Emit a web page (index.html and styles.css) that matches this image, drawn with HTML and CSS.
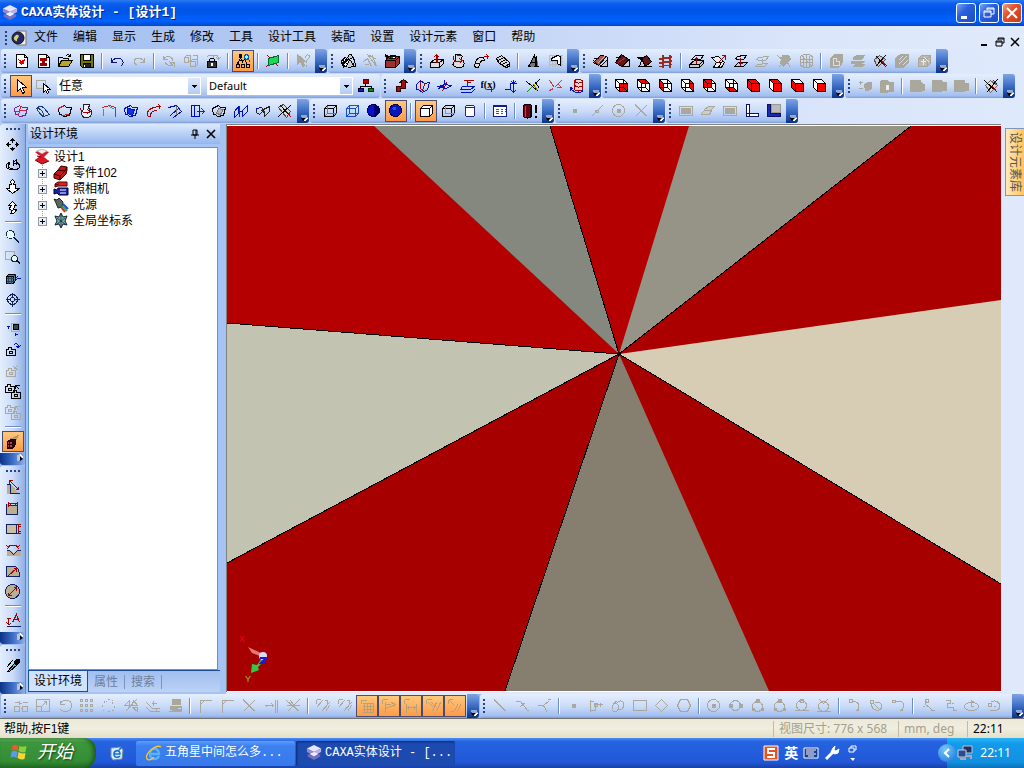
FILE: index.html
```
<!DOCTYPE html>
<html lang="zh-CN">
<head>
	<meta charset="utf-8">
	<title>CAXA实体设计 - [设计1]</title>
	<link rel="stylesheet" href="styles.css">
</head>
<body>
	<header class="title">
		<svg class="logo" viewBox="0 0 18 18"><path d="M9 0l8 4-8 4-8-4z" fill="#e8e4ff"/><path d="M1 4l8 4v4L1 8z" fill="#8f8bd0"/><path d="M17 4L9 8v4l8-4z" fill="#b9b2ea"/><path d="M2 10l7 3 7-3v3l-7 4-7-4z" fill="#7770bd"/><path d="M4 10l5 3 5-3-5-2z" fill="#f0ecff"/></svg>
		<h1>CAXA实体设计 - [设计1]</h1>
		<button class="win" aria-label="最小化"><svg viewBox="0 0 18 18"><path d="M4 12h6v3H4z" fill="#fff"/></svg></button>
		<button class="win" aria-label="还原"><svg viewBox="0 0 18 18"><path d="M7 6V4h7v6h-3M4 7h7v6H4zM4 8h7M7 5h7" fill="none" stroke="#fff"/></svg></button>
		<button class="win close" aria-label="关闭"><svg viewBox="0 0 18 18"><path d="M4 4l10 10M14 4L4 14" stroke="#fff" stroke-width="2"/></svg></button>
	</header>

	<nav class="menu">
		<i class="grip"></i>
		<svg class="doc" viewBox="0 0 16 16"><path d="M6 1h9v14H6z" fill="#f4f0dc" stroke="#777"/><circle cx="7" cy="8" r="6" fill="#23276b" stroke="#111"/><path d="M4 6c3-3 5 0 3 2s0 4-2 3-3-3-1-5z" fill="#d6d668"/></svg>
		<button>文件</button><button>编辑</button><button>显示</button><button>生成</button><button>修改</button><button>工具</button><button>设计工具</button><button>装配</button><button>设置</button><button>设计元素</button><button>窗口</button><button>帮助</button>
		<div class="mdi">
			<button aria-label="最小化"><svg viewBox="0 0 10 10"><path d="M1 7h6v2H1z"/></svg></button>
			<button aria-label="还原"><svg viewBox="0 0 10 10"><path d="M3 3V1h6v5H7M1 4h6v5H1zM1 5h6M3 2h6" fill="none" stroke="#000"/></svg></button>
			<button aria-label="关闭"><svg viewBox="0 0 10 10"><path d="M1 1l8 8M9 1L1 9" stroke="#000" stroke-width="1.5"/></svg></button>
		</div>
	</nav>

	<div class="dock">
		<div class="row">
			<div class="bar" data-tools="new template open save | undo redo! | update! link! lock | tree* | plane | what!"></div>
			<div class="bar" data-tools="wizard wand! toolbox"></div>
			<div class="bar" data-tools="extrude revolve sweep loft | letter emboss"></div>
			<div class="bar" data-tools="fillet chamfer draft rib | thick pull offset surf! trim! mesh! | shell! slab! cut block! box!"></div>
		</div>
		<div class="row">
			<div class="bar plain">
				<i class="grip"></i>
				<span class="tools" data-tools="arrow* pick!"></span>
				<label class="combo any"><select aria-label="选择"><option>任意</option></select></label>
				<label class="combo style"><select aria-label="样式"><option>Default</option></select></label>
				<span class="tools" data-tools="config"></span>
			</div>
			<div class="bar" data-tools="bend folds axes layers fx align cross scratch helix"></div>
			<div class="bar" data-tools="front top left right back bottom all topback leftfront rightfront"></div>
			<div class="bar" data-tools="plusminus! solid! | union! minus! inter! | split"></div>
		</div>
		<div class="row">
			<div class="bar" data-tools="s1 s2 s3 s4 s5 s6 s7 s8 s9 s10 s11 s12 s13"></div>
			<div class="bar" data-tools="wire hidden half ball* | solidbox* boxwire cyl | table | render"></div>
			<div class="bar" data-tools="dot! diag! target! x!"></div>
			<div class="bar" data-tools="rect! slabs! rect! corner corner3"></div>
		</div>
	</div>

	<main class="work">
		<aside class="side">
			<div class="bar vert" data-tools="move rotate pawn snake | zoom zoomwin cubein center | look camnew camoff! cams cams! | texture*"></div>
			<div class="bar vert" data-tools="dim1 dim2 dim3 dim4 dim5 dim6 | text"></div>
			<div class="bar vert last" data-tools="dropper"></div>
		</aside>

		<section class="panel">
			<header>
				<h2>设计环境</h2>
				<button aria-label="固定"><svg viewBox="0 0 10 10"><path d="M3 1h4v5H3zM1 6h8M5 6v4M6 1v5" fill="none" stroke="#000"/></svg></button>
				<button aria-label="关闭"><svg viewBox="0 0 10 10"><path d="M1 1l8 8M9 1L1 9" stroke="#000" stroke-width="1.6"/></svg></button>
			</header>
			<div class="tree">
				<div class="node"><svg viewBox="0 0 16 16"><path d="M1 3l7-2 7 2-5 5 5 4-7 3-7-4 5-4z" fill="#d81828"/><path d="M3 2l5 3 5-3-5-2z" fill="#eee" stroke="#888" stroke-width=".5"/><path d="M1 11l7 4 7-3M3 7l4 1" fill="none" stroke="#700"/></svg>设计1</div>
				<ul>
					<li class="node"><button aria-label="展开"></button><svg viewBox="0 0 16 16"><path d="M5 5l3-4 6 1v3l-1 4-6 6-6-2V9z" fill="#c01818" stroke="#300"/><path d="M5 5l7 1 2-4M1 9l6 2 5-5M7 11v4" fill="none" stroke="#300"/></svg>零件102</li>
					<li class="node"><button aria-label="展开"></button><svg viewBox="0 0 16 16"><path d="M5 1h9v4H5L2 6V3zM2 4l4-1" fill="#d22" stroke="#500"/><path d="M5 7h10v7H6l-2-2-3 1V8l3 1z" fill="#1525a8" stroke="#003"/><path d="M7 9h6M7 12h6" stroke="#fff"/></svg>照相机</li>
					<li class="node"><button aria-label="展开"></button><svg viewBox="0 0 16 16"><path d="M1 2l3 1 2-2 4 4-1 5-4 1-2-5z" fill="#586860" stroke="#222"/><path d="M8 10l4 5" stroke="#d22" stroke-width="2"/><path d="M9 9l5 5" stroke="#2a3" stroke-width="2"/><path d="M10 7l5 5" stroke="#24d" stroke-width="2"/></svg>光源</li>
					<li class="node"><button aria-label="展开"></button><svg viewBox="0 0 16 16"><path d="M8 0l2 4 4-1-2 5 2 4-4-1-2 4-2-4-4 1 2-4-2-5 4 1z" fill="#75aaa5" stroke="#123"/><path d="M8 1v13M4 5l8 6M12 5l-8 6" stroke="#123" stroke-width=".7"/></svg>全局坐标系</li>
				</ul>
			</div>
			<div class="tabs"><button class="on">设计环境</button><button>属性</button><button>搜索</button></div>
		</section>

		<section class="view">
			<svg class="scene" viewBox="0 0 774 565" preserveAspectRatio="none">
				<path d="M0 0H774V565H0z" fill="#a60000"/>
				<path d="M392 228L0 197V0H147z" fill="#b40000"/>
				<path d="M392 228L147 0H323z" fill="#85887e"/>
				<path d="M392 228L323 0H462z" fill="#b40000"/>
				<path d="M392 228L462 0H684z" fill="#969486"/>
				<path d="M392 228L684 0H774V174z" fill="#aa0000"/>
				<path d="M392 228L774 174V458z" fill="#d7ccb4"/>
				<path d="M392 228L542 565H278z" fill="#867e6e"/>
				<path d="M392 228L0 437V197z" fill="#c2c4b1"/>
				<path d="M392 228L0 197M392 228L323 0M392 228L684 0M392 228L774 458M392 228L278 565M392 228L0 437" stroke="#000" fill="none" shape-rendering="crispEdges"/>
				<circle cx="392" cy="228" r="2"/>
			</svg>
			<svg class="triad" viewBox="0 0 34 52">
				<path d="M9 13l4 6 8 3 1-3z" fill="#e07878"/><path d="M23 24l-5 7-5-1-1 9 8-3-1-3 6-6z" fill="#36c845"/>
				<circle cx="24" cy="22" r="4" fill="#d8d8f8"/><path d="M21 24h6l-5 5h5" fill="none" stroke="#1818d8" stroke-width="2"/>
				<text x="0" y="8" fill="#f00020">X</text><text x="6" y="48" fill="#a0c000">Y</text>
			</svg>
		</section>

		<aside class="catalog"><button>设计元素库</button></aside>
	</main>

	<div class="row foot">
		<div class="bar" data-tools="mv! scale! turn! array! ring! mirror! off! stamp! | corner1! corner1! x! extend! trimx! | arrows! arrows! grid* ang* dist* par* perp*"></div>
		<div class="bar wide" data-tools="line! tangent! branch! | dot! poly! loops! frame! diamond! hex! | target! circ2! circ3! circ3! circ4! circ5! | arc1! arc2! arc3! | spl1! spl2! ell! ell2!"></div>
	</div>

	<footer class="status">
		<span class="help">帮助,按F1键</span>
		<span class="off size">视图尺寸: 776 x 568</span>
		<span class="off unit">mm, deg</span>
		<span class="clock">22:11</span>
	</footer>

	<div class="taskbar">
		<button class="start"><svg viewBox="0 0 18 18"><path d="M2 3c2-2 4-1 6 0L7 8c-2-1-4-2-6 0z" fill="#f0582a"/><path d="M9 3c2 1 4 1 7 0l-1 6c-3 1-5 0-7-1z" fill="#8ccf3c"/><path d="M1 9c2-2 4-1 6 0l-1 6c-2-1-4-2-6 0z" fill="#5a9bf0"/><path d="M8 9c2 1 4 2 7 1l-1 6c-3 1-5 0-7-1z" fill="#fbd333"/></svg>开始</button>
		<button class="quick" aria-label="桌面"><svg viewBox="0 0 16 16"><path d="M2 3l10-1 2 3-1 9-9 1-2-3z" fill="#d9ecfb" stroke="#789"/><path d="M5 9h6c0-5-6-4-6 0s4 4 6 2M10 5l4-4" fill="none" stroke="#1673c8" stroke-width="1.6"/></svg></button>
		<button class="task"><svg viewBox="0 0 16 16"><path d="M4 9h9c0-7-9-7-9 0s7 6 9 2" fill="none" stroke="#58b4f4" stroke-width="2.4"/><path d="M1 14C-2 9 10-1 15 2M1 14c2 2 5 0 7-2" fill="none" stroke="#f5c63a" stroke-width="1.4"/></svg>五角星中间怎么多...</button>
		<button class="task on"><svg viewBox="0 0 18 18"><path d="M9 0l8 4-8 4-8-4z" fill="#e8e4ff"/><path d="M1 4l8 4v4L1 8z" fill="#8f8bd0"/><path d="M17 4L9 8v4l8-4z" fill="#b9b2ea"/><path d="M2 10l7 3 7-3v3l-7 4-7-4z" fill="#7770bd"/><path d="M4 10l5 3 5-3-5-2z" fill="#f0ecff"/></svg>CAXA实体设计 - [...</button>
		<div class="ime">
			<svg viewBox="0 0 16 16"><path d="M1 1h14v14H1z" fill="#e9501f" stroke="#fff"/><path d="M12 4H5v4h6v4H4" fill="none" stroke="#fff" stroke-width="2"/></svg>
			<b>英</b>
			<svg viewBox="0 0 16 16"><path d="M1 3h14v10H1z" fill="#1c3c90" stroke="#fff"/><path d="M3 5h10M3 7h8M3 9h10M5 11h6" fill="none" stroke="#fff"/></svg>
			<svg viewBox="0 0 16 16"><path d="M2 14l7-7" stroke="#fff" stroke-width="3"/><path d="M9 3l2-2-1 4 2 1 3-2-1 4-3 1-4-2z" fill="#fff" stroke="#fff"/></svg>
			<svg viewBox="0 0 16 16"><path d="M6 3V1h5v4H9M4 3h5v4H4z" fill="none" stroke="#fff"/><path d="M5 13h5l-2 3z" fill="#fff"/></svg>
		</div>
		<div class="tray">
			<button aria-label="显示隐藏图标"><svg viewBox="0 0 10 10"><path d="M7 1L3 5l4 4" fill="none" stroke="#fff" stroke-width="2"/></svg></button>
			<svg viewBox="0 0 16 16"><path d="M6 1h9v7H6z" fill="#20305c" stroke="#b8c4dc"/><path d="M1 5h8v7H1z" fill="#2c4a90" stroke="#c8d0e4"/><path d="M3 14h6M9 11h5v3" stroke="#a8a8b8" stroke-width="2" fill="none"/></svg>
			<time>22:11</time>
		</div>
	</div>
	<script src="script.js"></script>
</body>
</html>
```
FILE: styles.css
```
* {
	box-sizing: border-box;
	margin: 0;
	padding: 0;
}
body {
	display: flex;
	flex-direction: column;
	min-height: 100vh;
	overflow: hidden;
	background: #dfe9fb;
	color: #000;
	font: 12px/16px "Liberation Sans", "Noto Sans CJK SC", sans-serif;
}
button, select {
	border: 0;
	background: none;
	color: inherit;
	font: inherit;
}
svg {
	display: block;
	flex: none;
}

/* title */
.title {
	display: flex;
	align-items: center;
	gap: 3px;
	height: 26px;
	padding: 0 2px;
	background: linear-gradient(#2a7cf2, #0a5cf0 15%, #0054e3 40%, #0062ff 80%, #0046c8);
}
.logo {
	width: 16px;
	height: 18px;
}
.title h1 {
	flex: 1;
	color: #fff;
	font: bold 13px/20px "Liberation Mono", "Noto Sans CJK SC", monospace;
	text-shadow: 1px 1px #0a2a80;
}
.win {
	width: 20px;
	height: 20px;
	border: 1px solid #fff;
	border-radius: 3px;
	background: linear-gradient(135deg, #7ba2f0, #2b5fdc 40%, #1c4cc8);
}
.win svg {
	width: 18px;
	height: 18px;
}
.win.close {
	background: linear-gradient(135deg, #f0a080, #e0502c 40%, #c83c18);
}

/* menu */
.menu {
	display: flex;
	align-items: center;
	height: 23px;
	padding-left: 2px;
	background: linear-gradient(90deg, #9fbcf0, #bdd0f5 40%, #dbe6fa 80%, #e0eafb);
}
.menu > button {
	padding: 0 8px 2px 7px;
}
.doc {
	width: 16px;
	height: 16px;
}
.mdi {
	display: flex;
	gap: 5px;
	margin: 8px 4px 0 auto;
}
.mdi svg {
	width: 10px;
	height: 10px;
}

/* toolbars */
.dock {
	background: linear-gradient(90deg, #b4caf4, #d0defa 50%, #dfe9fc);
}
.row {
	display: flex;
	gap: 1px;
	height: 25px;
	padding-left: 1px;
}
.bar {
	display: flex;
	flex: none;
	align-items: center;
	height: 24px;
	overflow: hidden;
	border-radius: 3px;
	background: linear-gradient(#e4eefd, #cbdcf8 50%, #a3bff0 90%, #7f9fd8);
}
.bar.plain {
	padding-right: 3px;
}
.grip {
	flex: none;
	width: 2px;
	height: 14px;
	margin: 0 4px 0 3px;
	background: repeating-linear-gradient(#27427c 0 2px, transparent 2px 4px);
}
.tools {
	display: flex;
}
.tool {
	flex: none;
	width: 22px;
	height: 22px;
	padding: 2px;
	border: 1px solid transparent;
}
.tool svg {
	width: 16px;
	height: 16px;
	shape-rendering: crispEdges;
}
.tool:disabled {
	color: #aaa79c;
}
.tool:disabled path {
	stroke: currentColor;
}
.tool.on {
	border-color: #4b4b6f;
	background: linear-gradient(#ffc87c, #ff9a4a);
}
.foot .on {
	color: #b8a078;
}
.foot .on path {
	stroke: currentColor;
}
.sep {
	flex: none;
	width: 2px;
	height: 16px;
	margin: 0 3px;
	border-left: 1px solid #6a8ccb;
	background: #fff;
}
.cap {
	flex: none;
	align-self: stretch;
	width: 12px;
	margin-left: 1px;
	padding-top: 13px;
	background: linear-gradient(#7ea4e6, #3c6cc4 50%, #0a3288);
}
.cap svg {
	width: 12px;
	height: 10px;
}
.combo {
	height: 18px;
	margin-right: 6px;
	background: #fff;
}
.combo select {
	width: 100%;
	height: 18px;
	padding-left: 2px;
	appearance: none;
	background: linear-gradient(#000, #000) right 4px top 8px / 5px 1px no-repeat, linear-gradient(#000, #000) right 5px top 9px / 3px 1px no-repeat, linear-gradient(#000, #000) right 6px top 10px / 1px 1px no-repeat, linear-gradient(#dce8fc, #b4ccf4) right 1px top 1px / 12px 16px no-repeat;
}
.any {
	width: 144px;
	margin-left: 3px;
}
.style {
	width: 146px;
	margin-right: 2px;
}
.style select {
	font: 11px/16px "Noto Sans", sans-serif;
}

/* work area */
.work {
	display: grid;
	flex: 1;
	grid-template-columns: 26px 200px 1fr 23px;
	min-height: 0;
}
.side {
	display: flex;
	flex-direction: column;
	gap: 1px;
	background: #9fbdf0;
	border-right: 1px solid #5a86cc;
}
.vert {
	flex-direction: column;
	width: 25px;
	height: auto;
	background: linear-gradient(90deg, #e4eefd, #cbdcf8 50%, #8fafe6);
}
.vert .grip {
	width: 14px;
	height: 2px;
	margin: 4px 0;
	background: repeating-linear-gradient(90deg, #27427c 0 2px, transparent 2px 4px);
}
.vert .tool {
	height: 21px;
}
.vert .sep {
	width: 16px;
	height: 2px;
	margin: 3px 0;
	border-left: 0;
	border-top: 1px solid #6a8ccb;
}
.vert .cap {
	width: auto;
	height: 12px;
	margin: 1px 0 0;
	padding: 1px 0 0 13px;
	background: linear-gradient(90deg, #0a3288, #3c6cc4 50%, #8fb0ea);
}
.vert .cap svg {
	transform: rotate(-90deg);
}
.vert.last {
	flex: 1;
}
.vert.last .cap {
	margin-top: auto;
}
.panel {
	display: flex;
	flex-direction: column;
	padding: 0 6px 2px 2px;
	background: #a5c3f3;
}
.panel header {
	display: flex;
	align-items: center;
	gap: 6px;
	height: 20px;
	margin-bottom: 3px;
	padding: 0 4px 0 2px;
	background: linear-gradient(#dce9fd, #94b6ee);
}
.panel h2 {
	flex: 1;
	font-size: 12px;
	font-weight: normal;
}
.panel header svg {
	width: 10px;
	height: 10px;
}
.tree {
	flex: 1;
	margin-right: 2px;
	padding: 1px 5px;
	border: 1px solid #5f93d8;
	background: #fff;
}
.node {
	display: flex;
	align-items: center;
	gap: 4px;
	height: 16px;
}
.node svg {
	width: 16px;
	height: 16px;
}
.tree ul {
	list-style: none;
	padding-left: 4px;
	background: repeating-linear-gradient(#999 0 1px, transparent 1px 2px) 8px 0 / 1px 56px no-repeat;
}
.node button {
	flex: none;
	width: 9px;
	height: 9px;
	margin-right: 2px;
	border: 1px solid #8c98b4;
	background: linear-gradient(#000, #000) 1px 3px / 5px 1px no-repeat, linear-gradient(#000, #000) 3px 1px / 1px 5px no-repeat, #eee;
}
.tabs {
	display: flex;
	height: 22px;
	border-top: 1px solid #1d4c9c;
	background: linear-gradient(#a0beef, #bcd2f6);
}
.tabs button {
	padding: 0 0 0 6px;
	color: #6f7f9c;
}
.tabs button:not(.on)::after {
	content: "";
	margin-left: 6px;
	border-right: 1px solid #7b93bd;
}
.tabs .on {
	padding: 0 5px;
	border: 1px solid #1d4c9c;
	border-top: 0;
	background: #cfe3ff;
	color: #000;
}
.view {
	position: relative;
	margin-bottom: 2px;
	padding: 1px 0;
	border-top: 1px solid #808080;
	border-left: 1px solid #808080;
	background: #fff;
}
.scene {
	width: 100%;
	height: 100%;
}
/* axis marker floats over the scene */
.triad {
	position: absolute;
	left: 12px;
	bottom: 6px;
	width: 34px;
	height: 52px;
	font: 9px "Liberation Sans", sans-serif;
}
.catalog {
	padding: 4px 0 0 4px;
	background: #dfe9fb;
}
.catalog button {
	width: 19px;
	height: 68px;
	border: 1px solid #8294b8;
	border-right: 0;
	background: linear-gradient(90deg, #ffeab8, #ffc35c);
	color: #555;
	writing-mode: vertical-rl;
	text-orientation: sideways;
}

/* bottom */
.foot {
	height: 24px;
	background: #9db9ea;
}
.wide {
	flex: 1;
}
.wide .cap {
	margin-left: auto;
}
.status {
	display: flex;
	align-items: center;
	height: 20px;
	border-top: 1px solid #707070;
	background: linear-gradient(#ece9d8, #f1eee0 50%, #e3dfc8);
}
.status .help {
	flex: 1;
	padding-left: 4px;
}
.status span + span {
	padding-left: 5px;
	border-left: 1px solid #bfbba5;
	font-family: "Noto Sans", "Noto Sans CJK SC", sans-serif;
}
.status .off {
	color: #a3a08e;
}
.size {
	width: 125px;
}
.unit {
	width: 69px;
}
.clock {
	width: 57px;
}
.taskbar {
	display: flex;
	align-items: center;
	height: 30px;
	background: linear-gradient(#4a8cf4, #2663e0 12%, #2158d8 80%, #1941a5);
	color: #fff;
}
.start {
	display: flex;
	align-items: center;
	gap: 8px;
	width: 96px;
	height: 30px;
	padding: 0 12px 2px 10px;
	border-radius: 0 12px 12px 0;
	background: linear-gradient(#6cb86c, #3c963c 15%, #358e35 75%, #256e25);
	box-shadow: inset -3px 0 4px #1d5c1d;
	font: italic 18px/24px "Liberation Sans", "Noto Sans CJK SC", sans-serif;
	text-shadow: 1px 1px 2px #123c12;
	white-space: nowrap;
}
.start svg {
	width: 19px;
	height: 18px;
}
.quick {
	width: 40px;
	padding-left: 13px;
}
.quick svg, .task svg, .ime svg, .tray svg {
	width: 16px;
	height: 16px;
}
.task {
	display: flex;
	align-items: center;
	gap: 3px;
	width: 159px;
	height: 25px;
	margin-right: 1px;
	padding: 0 10px;
	border-radius: 2px;
	background: linear-gradient(#5c9cfa, #3c80f0 20%, #3878ea);
	font-family: "Liberation Mono", "Noto Sans CJK SC", monospace;
	white-space: nowrap;
}
.task.on {
	background: #1c4aae;
	box-shadow: inset 1px 1px 2px #0c2c7c;
}
.ime {
	display: flex;
	align-items: center;
	gap: 5px;
	margin-left: auto;
	padding-right: 79px;
}
.ime b {
	font-size: 14px;
}
.tray {
	display: flex;
	align-items: center;
	gap: 1px;
	height: 30px;
	margin-left: 7px;
	padding-right: 13px;
	background: linear-gradient(#28b4f4, #129aeb 20%, #1290e0 80%, #0c70b8);
}
.tray button {
	width: 18px;
	height: 18px;
	margin-left: -9px;
	padding: 4px;
	border-radius: 50%;
	background: radial-gradient(circle at 40% 30%, #74c8fc, #1a70d8);
}
.tray button svg {
	width: 10px;
	height: 10px;
}
.tray time {
	margin-left: 6px;
	font-family: "Noto Sans", sans-serif;
}
```
FILE: script.js
```
const K = 'currentColor', R = '#a00000', B = '#0010c0', N = 'none', W = '#fff', G = '#aaa79c';

function p(d, stroke = K, fill = N) {
	return '<path d="' + d + '" stroke="' + stroke + '" fill="' + fill + '"/>';
}

// view cubes: wire box with some faces painted
const FACES = {
	front: 'M5 5h8v8h-8z', top: 'M1 1h8l4 4h-8z', left: 'M1 1l4 4v8l-4-4z',
	back: 'M1 1h8v8h-8z', bottom: 'M1 9h8l4 4h-8z', right: 'M9 1l4 4v8l-4-4z'
};
function cube(faces, hollow) {
	let s = p('M1 1h8l4 4v8h-8l-4-4z', K, W);
	faces.forEach(f => s += p(FACES[f], K, '#f00'));
	return s + p('M1 1l4 4h8M5 5v8' + (hollow ? 'M9 1v8h-8M9 9l4 4' : ''));
}
function camera(x, y) {
	return p(`M${x} ${y + 2}h2v-2h3v2h4v6h-9zM${x + 3} ${y + 4}h3v2h-3z`);
}
const sheet = p('M3 1h8l3 3v10H3zM11 1v3h3', K, W);
const box3 = 'M2 5l3-3h9v8l-3 3H2zM2 5h9v8M11 5l3-3';
const quad = 'M1 5l6-3 2 2h5l-2 8-6 1-2-2H2z';

const icons = {
	new: sheet + p('M5 6l3 2M12 6L8 8M6 9l2 2 3-2', '#d00') + p('M7 8h3v2H7z', '#d00', '#d00'),
	template: sheet + p('M5 5h6v2h-2v3h2v2h-6v-2h2v-3h-2z', '#900', '#900'),
	open: p('M1 13V4h4l1 1h5v2') + p('M1 13l3-6h11l-4 6z', K, '#b8a820') + p('M8 3c2-3 4-2 5 0M13 0v3h-3'),
	save: p('M1 1h13v13H3l-2-2z', K, '#777700') + p('M4 1h7v6H4z', K, W) + p('M4 10h7v4H4z', K, '#222') + p('M5 11v2', W),
	undo: p('M2 4v5h5M2 9c2-5 9-6 11-2s-1 5-2 6', '#101080'),
	redo: p('M13 4v5H8M13 9C11 4 4 3 3 7s2 4 3 5'),
	update: p('M2 2v4h4M2 6c3-5 9-3 9 1M13 13V9H9M13 9c-3 5-9 3-9-1M8 8l4 5', G),
	link: p('M1 4l2-2h4v5l-2 2H1zM1 4h4v5M7 8l2-2h5v5l-2 2H7zM7 8h5v5M9 2h5v3', G),
	lock: p('M1 4l2-2h5v3M9 2c3-1 4 1 4 4l2-2M13 6l-2-2', G) + p('M4 8V6l1-1h3l1 1v2') + p('M2 8h9v6H2z', K, '#333') + p('M6 10h1v2H6z', W),
	tree: p('M5 1v4M5 5l-3 5M5 5l3 5M1 11h3v3H1zM6 11h3v3H6zM4 1h2v3H4zM3 7h5M2 11l1-2M11 11h3v3h-3zM12 11L9 6') + p('M9 2l2-1 2 1v3l-2 1-2-1zM13 6l2 3', '#0058c0', '#9ff'),
	plane: p('M1 13L14 1M2 2l11 11', R) + p('M3 5l10-3v7L3 12z', '#063', '#20d850'),
	what: p('M2 1v10l3-3 2 5 2-1-2-4h3z', K, K) + p('M10 4c0-4 5-3 4 0l-3 3v2M11 11v2', K),
	wizard: p('M1 7l4-3 3 4-2 5-4-1zM2 7l3 4M4 4l2 7M1 10l6-3', K, W) + p('M9 1h2l1 3-3 2-2-2zM8 6l3 2 2 5-5 1M12 3l2 4-1 5M12 13h3v-4', K, '#ccc') + p('M3 5v9', K),
	wand: p('M1 8l4-3 4 8M5 1l9 12M7 2l7 4M10 2l4 11M2 11h4'),
	toolbox: p('M1 7l4-4h10v7l-4 4H1z', K, '#a03030') + p('M1 7h10l4-4M11 7v7M4 5h7M6 4V2h5v2', K) + p('M1 1l3 2-2 2z', K, K) + p('M6 3h5v2', K, W),
	extrude: p('M1 9l4-3h9v4l-4 4H1z', K, '#ddd') + p('M1 9h9l4-3M10 9v5', K) + p('M7 9V1M4 4l3-3 3 3M8 9V2', R),
	revolve: p('M4 1h5l2 2-2 3c5 1 5 8-1 8s-9-3-4-7z', K, '#ddd') + p('M2 3c-2 5 4 6 9 4M8 5l3 2-3 3M5 2h4', R),
	sweep: p('M1 12c1-6 4-9 9-8l1 3c-4-1-5 3-6 7H2zM2 10c2-1 3 0 4 1', K, '#ddd') + p('M10 3h5M13 1l2 2-2 3', R),
	loft: p('M1 5l5-3 8 7v4l-4 1L3 9z', K, '#ddd') + p('M3 7l5-3M5 9l5-3M7 11l5-3M10 13l4-3'),
	letter: p('M2 13h3M3 13L9 2l2 11h-3M5 9h5M11 2v11h2M10 3v10', K, '#777'),
	emboss: p('M2 1v12M5 1v12M8 1v12M11 1v12M14 1v12M1 2h14M1 5h14M1 8h14M1 11h14', '#bbb') + p('M4 5l6-3 3 1v9l-3-2V7H4z', K, W),
	fillet: p('M1 9l7-7 6 1-8 9z', K, '#b05050') + p('M1 5h5M1 7l4 4M7 12h8v-9', K) + p('M8 13l7-7v7z', K, '#ccc') + p('M5 10l7-7', '#e0a0a0'),
	chamfer: p('M1 9l6-8 7 5-7 7z', K, '#651515') + p('M1 4h5M8 13h7V6z', K, '#ccc') + p('M4 9l7-5', '#a33'),
	draft: p('M5 5l5-3 5 6-6 5z', K, '#651515') + p('M1 4h5l-3 9h6l-4-7zM1 13h14', K),
	rib: p('M4 1v13M5 1v13M11 1v13M12 1v13M1 5l13-2M1 6l13-2M1 9l13-2M1 10l13-2M1 13l13-2', '#9a2a20'),
	thick: p('M1 11l5-4h9v3l-4 4H1z', K, '#ccc') + p('M1 11h10l4-4M11 11v3M3 6l4-4h8l-3 4z', K) + p('M8 10V4M6 6l2-2 2 2', R),
	pull: p('M1 4l7-1 6 6-3 5H3l3-5z', K, '#eee') + p('M6 9h5l-3 5M11 9l3-2', K) + p('M7 10l8-8M11 2h4v4', R),
	offset: p('M3 5c3-4 3-1 6-3h5l-3 4c-3-1-4 2-8-1zM2 13l4-4h9l-4 4z') + p('M8 12V5M6 7l2-2 2 2M6 10h4', R),
	surf: p('M2 6c3-4 5-1 7-3h5l-3 4c-3-1-4 2-9-1zM1 13c3-4 5-1 7-3h5l-3 3zM8 5v5'),
	trim: p('M1 2l12 10M6 2h6l2 4-7 7-3-3zM3 13l11-9M9 6l5 8', K, K),
	mesh: p('M2 3c4-3 8-3 12 0v9c-4 3-8 3-12 0zM2 6h12M2 9h12M5 2v11M8 1v12M11 2v11M3 2l10 10'),
	shell: p('M2 5l4-4h8v8l-4 5H2z', K, K) + '<path d="M5 5v7h6V8H8V5z" style="stroke:#ddd" fill="none"/>',
	slab: p('M3 4l3-2h8l-3 4H3zM1 8h13l-3 2H1zM3 13h9l2-2H5z', K, K),
	cut: p('M2 6l5-4 6 4-7 7-3-3z', '#555', '#ccc') + p('M3 13L13 2M4 3l10 11', K) + p('M9 8l5 6M10 8l5 5', R),
	block: p('M1 5l5-4h8v8l-5 5H1z', K, K) + '<path d="M4 7l4-4M4 11l8-8M8 12l5-5" style="stroke:#ddd"/>',
	box: p(box3, K, '#bab7ac') + '<path d="M4 8h5M7 5v6M8 4l5 5" style="stroke:#eee"/>',

	arrow: p('M4 1v12l3-3 2 5 2-1-2-5h4z', K, W),
	pick: p('M1 2h9v8H1z') + '<path d="M8 5v9l2-2 2 3 1-1-1-3h3z" style="stroke:#000" fill="#fff"/>',
	config: p('M5 1h5v4H5z', '#600', '#b00000') + p('M7 5v3M2 10V8h11v2') + p('M0 10h5v3H0z', '#003', '#1020a0') + p('M10 10h5v3h-5z', '#030', '#108020'),
	bend: p('M3 11v-3h5V4H6l4-3 4 3h-2v6H7v3H3z', '#300', '#a01010'),
	folds: p('M1 6l4-4 4 3 5-1-2 7-5 3-4-3H1z', B) + p('M5 2v8l4 3M9 5l-1 6', R),
	axes: p('M1 8l6-2 7 1-5 3zM7 2l-1 9M1 10l6-3', B) + p('M9 4l-4 9', R),
	layers: p('M3 8h12l-4 3H1zM1 14h11l3-3', B) + p('M4 2h10M7 4h4M8 1v7', R),
	fx: '<text x="-1" y="9" font-size="10" font-weight="bold" font-family="Liberation Serif" fill="#000">f(x)</text>' + p('M5 11h6M9 9l2 2-2 3', R),
	align: p('M1 11h6M7 11V5h6M10 1v13M8 12l2 2 2-2M8 3l2 2 2-2', B),
	cross: p('M1 3l12 10M2 13L14 1M10 4l4 6', K) + p('M8 6l4 6', '#770', '#ff0') + p('M9 6l4 6', '#dd0') + p('M1 14l5-5', '#090'),
	scratch: p('M2 2l5 7M14 2L7 9M2 12l4-2M11 6l3 3M9 9h5', '#c04040'),
	helix: p('M5 2c3-2 8-1 8 1v8c-2 2-6 2-8 0zM5 3c3 2 6 2 8 0', R, '#fcc') + p('M5 7c3 2 6 2 8 0', R) + p('M1 9c3 6 9 6 13 3M1 12l0-3 3 1', B),
	front: cube(['front'], true), top: cube(['top'], true), left: cube(['left'], true), right: cube(['right'], true),
	back: cube(['back'], true), bottom: cube(['bottom'], true), all: cube(['front', 'top', 'left']),
	topback: cube(['top', 'front']), leftfront: cube(['left', 'front']), rightfront: cube(['front']),
	plusminus: p('M1 4h4M3 2v4M1 10h4') + p('M7 6l3-2h4v6l-3 2H8z', K, K),
	solid: p('M1 3l2-1h5l2 2h4v9H9l-2 1H1z', K, K) + '<path d="M8 6v5" style="stroke:#eee" stroke-width="3"/>',
	union: p('M1 2h10l1 3 3 1v6l-5 1H1z', K, K), minus: p('M1 2h9l2 2h3v8h-5v1H1z', K, K), inter: p('M1 2h10v3h4v7h-4v1H1z', K, K),
	split: p('M2 7l5-5 7 5-7 7z', '#666', '#ddd') + p('M1 2l13 12M14 1L3 14') + p('M9 8l5 6M10 2l4 4', R),

	s1: p('M1 5l5-3 3 2h5l-2 8-6 1-2-2H2z', '#7020a0') + p('M7 3L5 12M1 8l12-1', '#d02040'),
	s2: p('M1 5c5-5 7-1 13 6l-6 2C5 12 3 8 1 5zM1 5c5 0 7 3 7 8', '#104080', '#d5dced'),
	s3: p(quad) + p('M1 5l6-3M4 12l8-1', '#c02020'),
	s4: p('M4 1h6l-1 4c5 2 4 8-1 9s-8-4-4-8z', '#222', '#e8eefb') + p('M1 5c1 5 7 5 10 3M8 6l3 2-3 2', R),
	s5: p('M1 4l7-2 6 2v9', '#d02020') + p('M2 12V5M8 3l5 3', '#20a0b0'),
	s6: p(quad, B) + p('M4 5l7 1-2 6-5-2z', B, '#1030f0'),
	s7: p('M2 13c-1-5 2-9 8-9M5 13c0-4 2-6 6-6M2 13h3', R) + p('M10 3h5M13 1l2 2-2 3', R),
	s8: p('M1 4l8-2 5 6-8 6M3 12l9-8', B) + p('M9 2v9', '#777'),
	s9: p('M2 2h8v11H2zM5 2v11', B) + p('M7 8h8M12 5l3 3-3 3', R),
	s10: p(quad) + p('M7 5l5 1-3 5-4-1z', '#777', '#b8b8b8'),
	s11: p('M1 8l4-5v7L1 14zM9 7l5-5v6l-5 5zM5 8h4', B) + p('M6 2v11', R),
	s12: p('M1 5l5-1 2 3-4 4-3-2zM8 6l6-3v5l-5 5zM6 7l4 2', '#222') + p('M1 5l5-1', B),
	s13: p('M1 4l5-3 7 7-4 6z', '#444', '#ddd') + p('M1 13L14 1M3 2l11 12') + p('M9 8l5 6', R),
	wire: p(box3) + p('M5 2v8h9M5 10l-3 3', '#777'), hidden: p(box3, '#1050d0') + p('M5 2v8h9M5 10l-3 3', '#1050d0'),
	half: '<circle cx="7" cy="7" r="6" fill="#0810c8" stroke="#000060"/><path d="M7 1a6 6 0 0 1 0 12z" fill="#000070"/>',
	ball: '<circle cx="7" cy="7" r="6" fill="#0818b8" stroke="#000050"/><circle cx="6" cy="5" r="2" fill="#2050f0"/>',
	solidbox: p(box3, K, W), boxwire: p(box3) + p('M5 2v8h9', '#c09040'),
	cyl: p('M3 3c2-2 7-2 9 0v9c-2 2-7 2-9 0zM3 3c2 2 7 2 9 0', '#202080', W),
	table: p('M1 2h13v11H1z', '#102080', W) + p('M1 3h13', '#102080') + p('M3 6h3M8 6h2M12 6h1M3 8h3M8 8h2M12 8h1M3 10h3M8 10h2', '#3050a0'),
	render: p('M1 2c2-2 6-2 8 0v11c-2 2-6 2-8 0z', K, '#700010') + p('M3 2v11', '#d04040') + p('M8 3v10M9 3v10M13 1v8M14 1v8M13 12v2M14 12v2', K),
	dot: p('M6 6h3v3H6z', K, K),
	diag: p('M2 13L13 2M6 7h3v2H6z'), target: '<circle cx="7" cy="7" r="6" stroke="currentColor" fill="none"/>' + p('M6 6h3v3H6z', K, K),
	x: p('M2 2l11 11M13 2L2 13M2 1l12 12'),
	rect: p('M1 3h13v9H1z') + p('M3 5h9v5H3z', K, K), slabs: p('M4 6l4-3h6l-4 4H4zM1 10l3-3h7l-2 4H1z', K, '#d0cdc2'),
	corner: p('M2 1h3v9h9v3H2zM2 10h3v3', '#101060', W), corner3: p('M1 1h3v9h10v3H1z', '#101060', '#1828b8') + p('M5 1h9v8H5z', '#999', '#bbb'),

	move: p('M7 1v4M7 9v4M1 7h4M9 7h4M5 3l2-2 2 2zM5 11l2 2 2-2zM3 5L1 7l2 2zM11 5l2 2-2 2z', K, K),
	rotate: p('M5 4C-1 5-1 10 5 11s10-1 9-4-3-3-4-3M5 5c-5 2-2 5 2 5M8 1v6M8 4l3-3v5z'),
	pawn: p('M7 0l2 2-1 3h2v4h4L7 14 1 9h3V5h2L5 2z', K, W), snake: p('M7 1l4 4H9c1 2-1 3-1 4h3c-1 3-4 5-6 4l2-3-3-1c0-3 2-3 2-4H3z', K, W),
	zoom: '<circle cx="5" cy="5" r="4" fill="#dff" stroke="#222"/>' + p('M8 8l6 6M9 8l5 5', '#101050'),
	zoomwin: p('M0 1h9v8H0z', G) + '<circle cx="9" cy="8" r="3" fill="#dff" stroke="#222"/>' + p('M11 10l4 4M12 10l3 3'),
	cubein: p('M1 5l2-2h7v6l-2 3H1zM1 5h7v7', K, '#5585a0') + p('M1 7h7M1 10h7M3 5v7M6 5v7M8 5l2-2', '#245') + p('M15 7h-4M12 5l-2 2 2 2', B),
	center: '<circle cx="7" cy="7" r="5" fill="none" stroke="#102050"/><circle cx="7" cy="7" r="2" fill="none" stroke="#102050"/>' + p('M7 0v5M7 9v5M0 7h5M9 7h5', '#102050'),
	look: p('M6 2h8v8H6z', '#aaa') + p('M8 3h5v5H8z', K, '#345') + p('M1 5h3M3 4v3M10 11v3M9 13h3', B),
	camnew: camera(1, 5) + p('M8 3c2-3 5-2 5 2M11 4l2 1 2-2', B), camoff: camera(1, 5) + p('M8 3l5 4M12 2L8 6'),
	cams: camera(0, 0) + camera(6, 6) + p('M10 1h4M10 1v3M10 1l4 4'),
	texture: p('M6 4l7-3-3 5z', '#997', '#c0a070') + p('M2 7l3-2h5v5l-3 4H2z', '#200', '#300') + p('M2 7h5v6H2z', '#200', '#b04050') + p('M4 7v6M2 10h5', '#200'),
	dim1: p('M1 5v9h12l-7-9z', N, '#bcae90') + p('M1 5h4v9h9', '#102060') + p('M4 1l9 9M4 1v3M4 1h3M13 7v3h-3', R),
	dim2: p('M3 5h9v9H1V3', '#102060', '#bcae90') + p('M3 1v5M12 1v5M3 3h9M5 2v3M10 2v3', R),
	dim3: p('M1 3h10v9H1z', '#102060', '#ccbf9f') + p('M11 3h4M11 12h4M13 3v9M12 5h3M12 10h3', R),
	dim4: p('M1 8h4l3 3 3-3h4v5H1z', N, '#bcae90') + p('M1 8h3l4 4 4-4h3', '#102060') + p('M2 7c1-6 10-6 11 0M1 3l3 3M14 3l-3 3', R),
	dim5: p('M1 3h7c4 0 6 3 6 10H1z', '#102060', '#bcae90') + p('M3 12l8-7M8 5h3v3', R),
	dim6: '<circle cx="7" cy="7" r="7" fill="#bcae90" stroke="#102060"/>' + p('M3 11l8-8M8 3h3v3M3 8v3h3', R),
	text: p('M1 13h14', '#102060') + p('M7 9l4-8 3 8M9 6h4M1 5h4M3 5v6M1 9l2 2 3-1', R),
	dropper: p('M2 13l8-9 2 2-8 7zM1 9l6-7', K, '#4db') + p('M9 3l2-2h3v3l-3 3z', K, K),

	mv: p('M1 8h5v5H1zM9 8h5v5H9zM1 4h5V2M9 4h5M6 2v4l3-2M7 10h2'), scale: p('M1 1h13v12H1zM1 8h5v5M6 8l5-5M8 3h3v3'),
	turn: p('M3 2v4h4M3 5c3-5 11-4 11 2s-6 8-11 4'), array: p('M1 1h2v2H1zM6 1h2v2H6zM11 1h2v2h-2zM1 6h2v2H1zM6 6h2v2H6zM11 6h2v2h-2zM1 11h2v2H1zM6 11h2v2H6zM11 11h2v2h-2z'),
	ring: p('M6 1h2M11 3v2M13 7v2M10 12h2M6 13h2M2 11v1M1 6v2M3 2v2M4 3h1M10 2h1'), mirror: p('M1 7h5V2zM8 7h6l-4-5zM9 9l5 4V9zM2 13L13 1'),
	off: p('M1 4l6 6h7M1 9l4 4h9M8 2v5M6 5h5M11 10v3'), stamp: p('M5 1h8v5H5zM3 8h11v3H3zM1 13h13V9', K, K),
	corner1: p('M3 14V2h11M3 6l4-4'), extend: p('M1 7h9M12 1v13M14 1v13M8 5l2 2-2 2M3 6v2'), trimx: p('M1 2l13 11M14 1L2 13M1 7h13M5 2l8 11'),
	arrows: p('M1 9l6-7M1 1h4M1 1v4M6 13l8-9M10 13l4-6M9 2h3v3'), grid: p('M1 2h6M2 1v4M3 5h11M3 8h11M3 11h11M3 14h11M5 4v10M8 4v10M11 4v10M14 4v10'),
	ang: p('M1 1h5M1 1v4M4 3v11M4 10l10-4M10 4l4 2-3 3M4 6h5'), dist: p('M1 1h5M1 1v4M3 5v9M13 5v9M3 9h10M5 7v4M11 7v4'),
	par: p('M1 1h5M1 1v4M3 4l5 5M6 4l5 5M7 13l4-9M11 13l4-9'), perp: p('M1 1h4M1 1v4M2 2l5 5M7 13l3-7M10 13l3-7M3 13h3'),
	line: p('M2 2l11 11M2 1l12 12'), tangent: p('M1 3h5l7 9M6 8l5-4M12 12h2'), branch: p('M1 7h6l6-5M7 7l4 7M11 1h3'),
	poly: p('M2 1v12M1 3h4M2 12h5V6h7M6 5h3v3H6zM12 4v4'), loops: p('M2 11c-2-7 7-8 6-2s-6 5-6 2M6 5c3-5 9-2 7 3s-7 4-5 0M3 5l4-3'), frame: p('M1 2h13v10H1z'),
	diamond: p('M7 1l6 6-6 6-6-6z'), hex: p('M4 1h7l3 6-3 6H4L1 7z'),
	circ2: '<circle cx="7" cy="7" r="5" stroke="currentColor" fill="none"/>' + p('M1 6h3v3H1zM11 6h3v3h-3z', K, K),
	circ3: '<circle cx="7" cy="8" r="5" stroke="currentColor" fill="none"/>' + p('M6 1h3v3H6zM2 10h2v2H2zM11 10h2v2h-2z', K, K),
	circ4: '<circle cx="7" cy="7" r="5" stroke="currentColor" fill="none"/>' + p('M0 12h14M6 1h3v3H6z'), circ5: '<circle cx="7" cy="8" r="5" stroke="currentColor" fill="none"/>' + p('M3 1l4 4 4-4M0 13h14'),
	arc1: p('M3 1h3v3H3zM6 3c6 0 8 4 5 9M9 12h3'), arc2: p('M2 2h3v3H2zM3 5c0 8 10 9 10 3s-6-4-6-4M5 5l6 6'), arc3: p('M2 2h3v2H2zM5 3h5c4 0 4 6 1 8M9 12h3v-2'),
	spl1: p('M5 1h3v3H5zM6 3c-4 5 6 5 5 9h3M2 8h2'), spl2: p('M3 2h5v3H5v4h6v3h3M9 5h2'), ell: '<ellipse cx="7" cy="8" rx="7" ry="4" stroke="currentColor" fill="none"/>' + p('M6 3h3M7 1v7M6 8h3'),
	ell2: p('M5 3c9-3 11 8 4 9H3M2 5h3v3H2zM7 8h2')
};

function svg(inner, box) {
	return '<svg viewBox="' + (box || '-0.5 -0.5 16 16') + '">' + inner + '</svg>';
}

// "name" plain, "name*" pressed, "name!" disabled, "|" separator
document.querySelectorAll('[data-tools]').forEach(el => {
	let html = el.dataset.tools.split(' ').map(t => {
		if (t === '|') return '<i class="sep"></i>';
		const name = t.replace(/[*!]/, '');
		return '<button class="tool' + (t.endsWith('*') ? ' on' : '') + '" aria-label="' + name + '"' +
			(t.endsWith('!') ? ' disabled' : '') + '>' + svg(icons[name]) + '</button>';
	}).join('');
	if (el.classList.contains('bar')) {
		html = '<i class="grip"></i>' + html + '<i class="cap">' +
			svg('<path d="M4 4h6M5 6h6l-3 3z" fill="#fff" stroke="#fff"/><path d="M4 6h5l-3 3z"/>', '0 0 12 10') + '</i>';
	}
	el.innerHTML = html;
});
```
